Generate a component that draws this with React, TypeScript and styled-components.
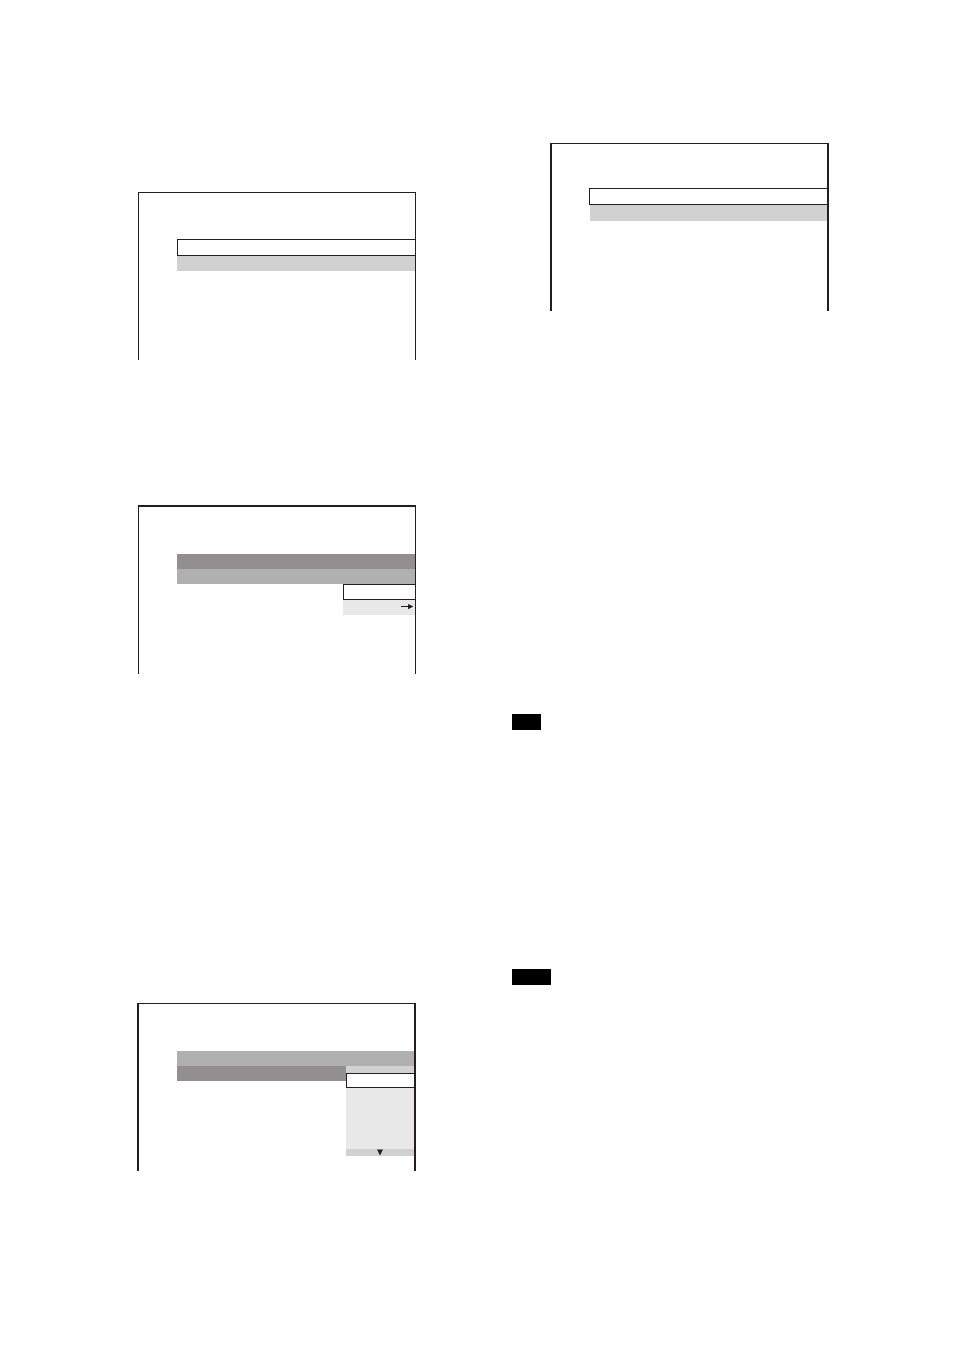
import React from "react";
import styled, { createGlobalStyle } from "styled-components";

const ink = "#231f20";
const tones = {
  dark: "#918f90",
  mid: "#b0b0b0",
  soft: "#d1d1d1",
  pale: "#e8e8e8",
};
type Tone = keyof typeof tones;

const GlobalStyle = createGlobalStyle`
  *, *::before, *::after { box-sizing: border-box; }
  body { margin: 0; background: #fff; font-family: "Liberation Sans", Arial, sans-serif; }
`;

const Page = styled.main`
  display: grid;
  grid-template-columns: 279fr 317fr;
  column-gap: 96px;
  padding: 143px 125px 180px 137px;
`;

const Column = styled.div`
  display: flex;
  flex-direction: column;
  min-width: 0;
`;

const LeftColumn = styled(Column)`
  padding-top: 49px;
`;

/* A display frame, open at the bottom; heavy frames have thicker sides. */
const Screen = styled.section<{
  $heavy?: boolean;
  $top?: number;
  $before?: number;
  $head: number;
  $indent?: number;
}>`
  display: flex;
  flex-direction: column;
  min-height: ${(p) => 167 + (p.$top ?? 1)}px;
  margin-top: ${(p) => p.$before ?? 0}px;
  margin-left: ${(p) => (p.$heavy ? 0 : 1)}px;
  padding: ${(p) => p.$head}px 0 0 ${(p) => p.$indent ?? 38}px;
  border: solid ${ink};
  border-width: ${(p) => p.$top ?? 1}px ${(p) => (p.$heavy ? 2 : 1)}px 0;
`;

const ColumnInset = styled.div`
  padding-left: 38px;
`;

const Bar = styled.div<{ $tone: Tone; $height?: number; $edge?: boolean }>`
  flex: none;
  height: ${(p) => p.$height ?? 15}px;
  background: ${(p) => tones[p.$tone]};
  border-left: ${(p) => (p.$edge ? "1px solid #fff" : "0")};
`;

const Selected = styled.div<{ $height: number }>`
  flex: none;
  height: ${(p) => p.$height}px;
  background: #fff;
  border: 1px solid ${ink};
  border-right: 0;
`;

const SplitRow = styled.div`
  display: flex;
  align-items: flex-start;
`;

const FillBar = styled(Bar)`
  flex: 1;
`;

const Menu = styled.div<{ $width: number }>`
  display: flex;
  flex: none;
  flex-direction: column;
  align-self: flex-end;
  width: ${(p) => p.$width}px;
`;

const ArrowBar = styled(Bar)`
  display: flex;
  align-items: center;
  justify-content: flex-end;
  padding-right: 2px;
`;

const ScrollBar = styled(Bar)`
  display: flex;
  align-items: flex-start;
  justify-content: center;
`;

const Tag = styled.div<{ $width: number; $before: number }>`
  width: ${(p) => p.$width}px;
  height: 16px;
  margin-top: ${(p) => p.$before}px;
  background: #000;
`;

const ArrowRight = () => (
  <svg width="12" height="7" viewBox="0 0 12 7" aria-hidden="true">
    <path d="M0 2h8v1H0z" fill={ink} />
    <path d="M7 0 12.5 2.6 7 5.2z" fill={ink} />
  </svg>
);

const ArrowDown = () => (
  <svg width="6" height="6" viewBox="0 0 6 6" aria-hidden="true">
    <path d="M0 .4h6L3.3 6H2.7z" fill={ink} />
  </svg>
);

export default function App() {
  return (
    <>
      <GlobalStyle />
      <Page>
        <LeftColumn>
          <Screen $head={46}>
            <Selected $height={17} />
            <Bar $tone="soft" />
          </Screen>

          <Screen $before={145} $top={2} $head={47}>
            <Bar $tone="dark" />
            <Bar $tone="mid" />
            <Menu $width={72}>
              <Selected $height={16} />
              <ArrowBar $tone="pale">
                <ArrowRight />
              </ArrowBar>
            </Menu>
          </Screen>

          <Screen $before={329} $heavy $head={47}>
            <Bar $tone="mid" />
            <SplitRow>
              <FillBar $tone="dark" />
              <Menu $width={68}>
                <Bar $tone="soft" $height={7} />
                <Selected $height={15} />
                <Bar $tone="pale" $height={61} />
                <ScrollBar $tone="soft" $height={7}>
                  <ArrowDown />
                </ScrollBar>
              </Menu>
            </SplitRow>
          </Screen>
        </LeftColumn>

        <Column>
          <ColumnInset>
            <Screen $heavy $head={44} $indent={37}>
              <Selected $height={17} />
              <Bar $tone="soft" $height={16} $edge />
            </Screen>
          </ColumnInset>
          <Tag $width={29} $before={403} />
          <Tag $width={39} $before={239} />
        </Column>
      </Page>
    </>
  );
}
